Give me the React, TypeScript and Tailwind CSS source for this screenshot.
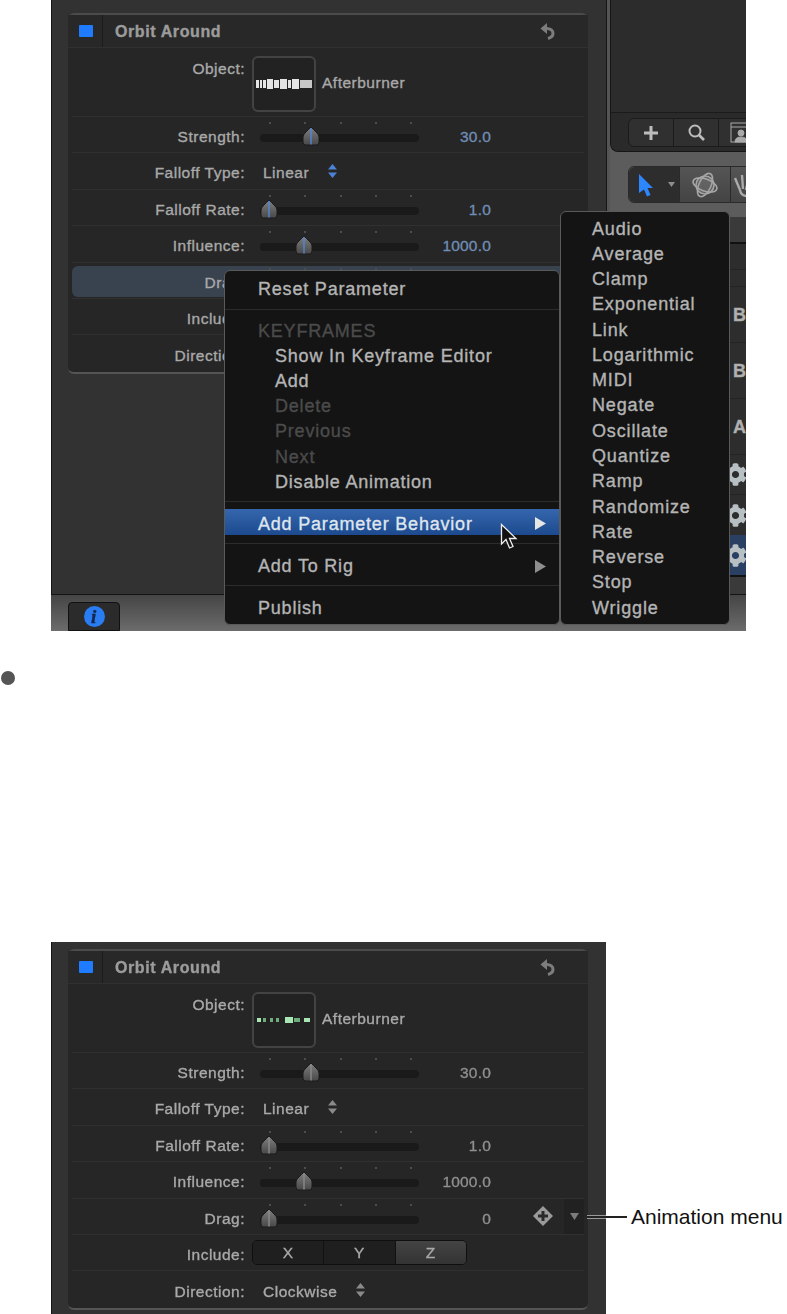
import { FaCog } from 'react-icons/fa';

const TICKS = [9, 44, 80, 115, 150];
const ITEMS = ['Audio', 'Average', 'Clamp', 'Exponential', 'Link', 'Logarithmic', 'MIDI', 'Negate', 'Oscillate', 'Quantize', 'Ramp', 'Randomize', 'Rate', 'Reverse', 'Stop', 'Wriggle'];

function Thumb({ blue, left }: { blue: boolean; left: number }) {
  return (
    <svg width="18" height="20" viewBox="0 0 18 20" className="absolute top-[9px]" style={{ left: left - 9 }}>
      <defs>
        <linearGradient id="thumbFill" x1="0" y1="0" x2="0" y2="1">
          <stop offset="0" stopColor="#808080" />
          <stop offset="1" stopColor="#484848" />
        </linearGradient>
      </defs>
      <path d="M9 1 Q11 3 15 7 Q17 9 17 11 V16 Q17 19 14.5 19 H3.5 Q1 19 1 16 V11 Q1 9 3 7 Q7 3 9 1 Z" fill="url(#thumbFill)" stroke="#1a1a1a" strokeWidth="1" />
      <rect x="8.3" y="2" width="1.4" height="16.5" fill={blue ? '#4f86d6' : '#8a8a8a'} />
    </svg>
  );
}

function Slider({ thumb, blue }: { thumb: number; blue: boolean }) {
  return (
    <div className="relative ml-[15px] h-full w-[159px] shrink-0">
      {TICKS.map((t) => (
        <span key={t} className="absolute top-[5px] h-[2px] w-[2px] bg-[#4d4d4d]" style={{ left: t }} />
      ))}
      <div className="absolute inset-x-0 top-[17px] h-[8px] rounded-full bg-[#1a1a1a]" />
      <Thumb blue={blue} left={thumb} />
    </div>
  );
}

function Stepper({ blue }: { blue: boolean }) {
  return (
    <svg width="9" height="14" viewBox="0 0 9 14" fill={blue ? '#4a82d8' : '#8a8a8a'} className="ml-[19px]">
      <path d="M4.5 0 L9 5.5 H0 Z M0 8.5 H9 L4.5 14 Z" />
    </svg>
  );
}

function Row({ label, last, children }: { label: string; last?: boolean; children?: React.ReactNode }) {
  return (
    <div className={`flex h-[36.4px] items-center ${last ? '' : 'border-b border-[#303030]'}`}>
      <div className="w-[173px] shrink-0 pt-[4px] text-right">{label}</div>
      {children}
    </div>
  );
}

function Inspector({ live }: { live: boolean }) {
  const value = `w-[72px] pt-[4px] text-right tracking-[0.2px] ${live ? 'text-[#6f8db5]' : 'text-[#8f8f8f]'}`;
  return (
    <div className="w-[520px] rounded-md border-t-2 border-b-2 border-t-[#4b4b4b] border-b-[#555] bg-[#262626] px-[4px] text-[#a9a9a9]">
      <div className="-mx-[4px] flex h-[33px] items-center border-b border-[#303030] bg-[#282828]">
        <div className="flex h-full w-[35px] items-center justify-center border-r border-[#1c1c1c]">
          <span className="ml-[2px] h-[12px] w-[14px] rounded-[1px] bg-[#1f7bff]" />
        </div>
        <span className="ml-[12px] w-[107px] pt-[2px] text-[16px] font-bold tracking-[0.6px] whitespace-nowrap text-[#9c9c9c]">Orbit Around</span>
        <svg width="15" height="17" viewBox="0 0 15 17" className="ml-[318px]" fill="none" stroke="#7d7d7d" strokeWidth="3">
          <path d="M4 5.5 H7 Q13 6 13 10.5 Q13 14 8 15.5" />
          <path d="M7 0 L0.5 5.5 L7 11 Z" fill="#7d7d7d" stroke="none" />
        </svg>
      </div>

      <div className="flex h-[69px] border-b border-[#303030]">
        <div className="mt-[13px] w-[173px] shrink-0 text-right">Object:</div>
        <div className="mt-[8px] ml-[7px] flex h-[56px] w-[64px] items-center justify-center rounded-md border-2 border-[#434343] bg-[#222]">
          <svg width="56" height="10" viewBox="0 0 56 10">
            {live ? (
              <g fill="#e4e4e4">
                <rect x="0" y="1" width="3" height="8" />
                <rect x="4" y="1" width="2" height="8" />
                <rect x="7" y="1" width="3" height="8" />
                <rect x="11" y="0" width="6" height="10" />
                <rect x="18" y="1" width="5" height="8" />
                <rect x="24" y="0" width="7" height="10" />
                <rect x="32" y="1" width="3" height="8" />
                <rect x="36" y="0" width="7" height="10" />
                <rect x="44" y="1" width="12" height="8" fill="#c8c8c8" />
              </g>
            ) : (
              <g fill="#a8e6b4">
                <rect x="1" y="3" width="4" height="4" />
                <rect x="7" y="3" width="3" height="4" fill="#6fae7c" />
                <rect x="14" y="3" width="3" height="4" fill="#6fae7c" />
                <rect x="20" y="3" width="3" height="4" fill="#6fae7c" />
                <rect x="29" y="2" width="8" height="6" />
                <rect x="38" y="3" width="6" height="4" fill="#6fae7c" />
                <rect x="48" y="3" width="6" height="4" />
              </g>
            )}
          </svg>
        </div>
        <span className="mt-[27px] ml-[6px]">Afterburner</span>
      </div>

      <Row label="Strength:">
        <Slider thumb={51} blue={live} />
        <span className={value}>30.0</span>
      </Row>
      <Row label="Falloff Type:">
        <span className="ml-[18px] pt-[4px]">Linear</span>
        <Stepper blue={live} />
      </Row>
      <Row label="Falloff Rate:">
        <Slider thumb={9} blue={live} />
        <span className={value}>1.0</span>
      </Row>
      <Row label="Influence:">
        <Slider thumb={44} blue={live} />
        <span className={value}>1000.0</span>
      </Row>
      <div className="relative">
        {live && <div className="absolute inset-x-0 top-[3px] h-[31px] rounded-md bg-[#39424f]" />}
        <div className="relative">
          <Row label="Drag:">
            <Slider thumb={9} blue={false} />
            <span className={value}>0</span>
            <svg width="22" height="22" viewBox="0 0 22 22" className="ml-[41px]">
              <path d="M11 1 L21 11 L11 21 L1 11 Z" fill="#9a9a9a" />
              <path d="M9.5 6 h3 v3.5 h3.5 v3 h-3.5 v3.5 h-3 v-3.5 h-3.5 v-3 h3.5 Z" fill="#2a2a2a" />
            </svg>
            <div className="ml-[10px] flex h-full w-[20px] items-center justify-center bg-[#212121]">
              <svg width="9" height="7" viewBox="0 0 9 7" fill="#7c7c7c">
                <path d="M0 0 H9 L4.5 7 Z" />
              </svg>
            </div>
          </Row>
        </div>
      </div>
      <Row label="Include:">
        <div className="ml-[7px] flex h-[25px] w-[215px] overflow-hidden rounded-[5px] border border-[#0f0f0f] text-[#a9a9a9]">
          <span className="flex flex-1 items-center justify-center border-r border-[#111] bg-[#1f1f1f]">X</span>
          <span className="flex flex-1 items-center justify-center border-r border-[#111] bg-[#1f1f1f]">Y</span>
          <span className="flex flex-1 items-center justify-center bg-gradient-to-b from-[#444] to-[#333]">Z</span>
        </div>
      </Row>
      <Row label="Direction:" last>
        <span className="ml-[18px] pt-[4px]">Clockwise</span>
        <Stepper blue={live} />
      </Row>
    </div>
  );
}

function MenuItem({ children, sub, off }: { children: string; sub?: boolean; off?: boolean }) {
  return (
    <div className={`flex h-[25.2px] items-center ${sub ? 'pl-[50px]' : 'pl-[33px]'} ${off ? 'text-[#4b4b4b]' : ''}`}>{children}</div>
  );
}

function Caret({ color }: { color: string }) {
  return (
    <svg width="11" height="13" viewBox="0 0 11 13" fill={color} className="absolute right-[13px]">
      <path d="M0 0 L11 6.5 L0 13 Z" />
    </svg>
  );
}

function ContextMenu() {
  return (
    <>
      <div className="absolute top-[270px] left-[173px] h-[355px] w-[336px] rounded-md border border-[#5a5a5a] bg-[#141414] pt-[5px] text-[18px] tracking-[0.8px] text-[#b4b4b4]">
        <MenuItem>Reset Parameter</MenuItem>
        <div className="flex h-[16.8px] items-center"><div className="h-px w-full bg-[#2b2b2b]" /></div>
        <MenuItem off>KEYFRAMES</MenuItem>
        <MenuItem sub>Show In Keyframe Editor</MenuItem>
        <MenuItem sub>Add</MenuItem>
        <MenuItem sub off>Delete</MenuItem>
        <MenuItem sub off>Previous</MenuItem>
        <MenuItem sub off>Next</MenuItem>
        <MenuItem sub>Disable Animation</MenuItem>
        <div className="flex h-[15px] items-center"><div className="h-px w-full bg-[#2b2b2b]" /></div>
        <div className="relative flex h-[26px] items-center bg-gradient-to-b from-[#3566ad] to-[#1d4a8e] pt-[3px] pl-[33px] text-[#dfe5ee]">
          Add Parameter Behavior
          <Caret color="#e6e6e6" />
        </div>
        <div className="flex h-[17px] items-center"><div className="h-px w-full bg-[#2b2b2b]" /></div>
        <div className="relative flex h-[25.2px] items-center pt-[3px] pl-[33px]">
          Add To Rig
          <Caret color="#8e8e8e" />
        </div>
        <div className="flex h-[16.8px] items-center"><div className="h-px w-full bg-[#2b2b2b]" /></div>
        <div className="flex h-[25.2px] items-center pt-[3px] pl-[33px]">Publish</div>
      </div>
      <div className="absolute top-[211px] left-[509px] h-[414px] w-[170px] rounded-md border border-[#5a5a5a] bg-[#141414] pt-[4px] pl-[31px] text-[18px] tracking-[0.85px] text-[#b4b4b4]">
        {ITEMS.map((item) => (
          <div key={item} className="flex h-[25.27px] items-center">{item}</div>
        ))}
      </div>
      <svg width="18" height="27" viewBox="0 0 18 27" className="absolute top-[523px] left-[449px]">
        <path d="M1.5 1.5 V21 L6 16.5 L9.5 25 L13 23.5 L9.5 15.5 H16 Z" fill="#111" stroke="#eee" strokeWidth="1.3" />
      </svg>
    </>
  );
}

function SidePane() {
  return (
    <div className="flex w-[136px] flex-col overflow-hidden bg-[#5c5c5c]">
      <div className="flex h-[152px] shrink-0 flex-col rounded-bl-lg border-b border-l border-[#161616] bg-[#2c2c2c]">
        <div className="mt-[112px] flex h-[40px] rounded-bl-lg border-t border-[#1b1b1b] bg-[#2a2a2a] pt-[5px] pl-[17px]">
          <div className="flex h-[29px] w-[140px] shrink-0 rounded-md border border-[#1b1b1b] bg-[#303030]">
            <span className="flex w-[45px] items-center justify-center border-r border-[#1b1b1b]">
              <svg width="16" height="16" viewBox="0 0 16 16" fill="#bdbdbd"><path d="M6.5 1 h3 v5.5 H15 v3 H9.5 V15 h-3 V9.5 H1 v-3 h5.5 Z" /></svg>
            </span>
            <span className="flex w-[45px] items-center justify-center border-r border-[#1b1b1b]">
              <svg width="19" height="19" viewBox="0 0 19 19" fill="none" stroke="#bdbdbd"><circle cx="8" cy="8" r="5.5" strokeWidth="2" /><path d="M12 12 L17 17" strokeWidth="2.6" /></svg>
            </span>
            <span className="flex items-center pl-[11px]">
              <svg width="22" height="21" viewBox="0 0 22 21" fill="none" stroke="#aaa"><rect x="1" y="1" width="20" height="19" /><path d="M1 5 H21" /><circle cx="11" cy="11" r="3" fill="#aaa" /><path d="M5 20 Q5 15 11 15 Q17 15 17 20 Z" fill="#aaa" /></svg>
            </span>
          </div>
        </div>
      </div>

      <div className="h-[65px] shrink-0 pt-[14px] pl-[18px]">
        <div className="flex h-[37px] w-[140px] rounded-md border border-[#2a2a2a] bg-gradient-to-b from-[#555] to-[#444]">
          <span className="relative flex w-[51px] shrink-0 items-center rounded-l-md border-r border-[#2a2a2a] bg-[#2d2d2d] pl-[9px]">
            <svg width="16" height="24" viewBox="0 0 16 24" fill="#2e86ff"><path d="M1 1 L15 15 H9.5 L12.5 22 L9 23.5 L6 16.5 L1 20 Z" /></svg>
            <svg width="7" height="5" viewBox="0 0 7 5" fill="#8d8d8d" className="ml-[14px]"><path d="M0 0 H7 L3.5 5 Z" /></svg>
          </span>
          <span className="flex w-[51px] shrink-0 items-center justify-center border-r border-[#2a2a2a]">
            <svg width="28" height="28" viewBox="0 0 28 28" fill="none" stroke="#a5a5a5" strokeWidth="1.6">
              <circle cx="14" cy="14" r="9" fill="#777" fillOpacity="0.5" />
              <ellipse cx="14" cy="14" rx="12.5" ry="6" transform="rotate(20 14 14)" />
              <ellipse cx="14" cy="14" rx="12.5" ry="6" transform="rotate(-65 14 14)" />
            </svg>
          </span>
          <span className="flex items-center pl-[3px]">
            <svg width="16" height="26" viewBox="0 0 16 26" fill="none" stroke="#aaa" strokeWidth="2.4"><path d="M1 6 L6 18 M8 3 L9 17 M15 4 L12 18 M6 18 Q7 24 13 24" /></svg>
          </span>
        </div>
      </div>

      <div className="flex h-[378px] flex-col bg-[#2d2d2d] text-[18px] font-bold text-[#b0b0b0]">
        <div className="h-[27px] shrink-0 border-b-2 border-[#111] bg-[#3a3a3a]" />
        <div className="h-[26px] shrink-0 border-b border-[#242424]" />
        <div className="h-[17px] shrink-0 border-b border-[#242424]" />
        <div className="flex h-[56px] shrink-0 items-center border-b border-[#242424] pl-[123px]">Bo</div>
        <div className="flex h-[56px] shrink-0 items-center border-b border-[#242424] pl-[123px]">Bo</div>
        <div className="flex h-[56px] shrink-0 items-center border-b border-[#242424] pl-[123px]">Ac</div>
        <div className="flex h-[40px] shrink-0 items-center border-b border-[#242424] pl-[114px]"><FaCog size={23} color="#b9c0c4" className="shrink-0" /></div>
        <div className="flex h-[40px] shrink-0 items-center pl-[114px]"><FaCog size={23} color="#b9c0c4" className="shrink-0" /></div>
        <div className="flex h-[40px] shrink-0 items-center bg-[#2a4063] pl-[114px]"><FaCog size={23} color="#b9c0c4" className="shrink-0" /></div>
        <div className="flex-1 border-t-2 border-[#111] bg-[#3a3a3a]" />
      </div>
    </div>
  );
}

export default function App() {
  return (
    <div className="h-[1314px] w-[787px] overflow-hidden bg-white font-['Liberation_Sans',sans-serif] text-[15.5px] leading-none tracking-[0.5px]">
      <div className="relative ml-[51px] h-[631px] w-[695px] overflow-hidden blur-[0.4px] [-webkit-text-stroke:0.35px]">
        <div className="flex h-[595px] border-b border-[#141414]">
          <div className="w-[555px] shrink-0 border-l border-[#161616] bg-[#323232] pt-[13px] pl-[16px]">
            <Inspector live />
          </div>
          <div className="w-[4px] shrink-0 border-l border-[#161616] bg-[#555]" />
          <SidePane />
        </div>
        <div className="h-[36px] bg-gradient-to-b from-[#454545] to-[#6c6c6c] pt-[7px] pl-[17px]">
          <div className="flex h-[29px] w-[52px] items-center justify-center rounded-t-[4px] border border-[#111] bg-[#2b2b2b]">
            <span className="flex h-[21px] w-[21px] items-center justify-center rounded-full bg-[#2a7cf2] font-['Liberation_Serif',serif] text-[19px] font-bold text-[#14264a] italic">i</span>
          </div>
        </div>
        <ContextMenu />
      </div>

      <div className="mt-[40px] ml-[1px] h-[14px] w-[14px] rounded-full bg-[#555]" />

      <div className="relative mt-[257px] flex">
        <div className="ml-[51px] h-[372px] w-[555px] shrink-0 overflow-hidden border-l border-[#161616] bg-[#323232] pt-[7px] pl-[16px] blur-[0.4px] [-webkit-text-stroke:0.35px]">
          <Inspector live={false} />
        </div>
        <span className="ml-[25px] pt-[264px] text-[21px] tracking-normal whitespace-nowrap text-[#111]">Animation menu</span>
        <div className="absolute top-[274px] left-[587px] h-[2px] w-[40px] bg-[#222]" />
        <div className="absolute top-[273px] left-[587px] h-px w-[19px] bg-[#999]" />
        <div className="absolute top-[276px] left-[587px] h-px w-[19px] bg-[#999]" />
      </div>
    </div>
  );
}
